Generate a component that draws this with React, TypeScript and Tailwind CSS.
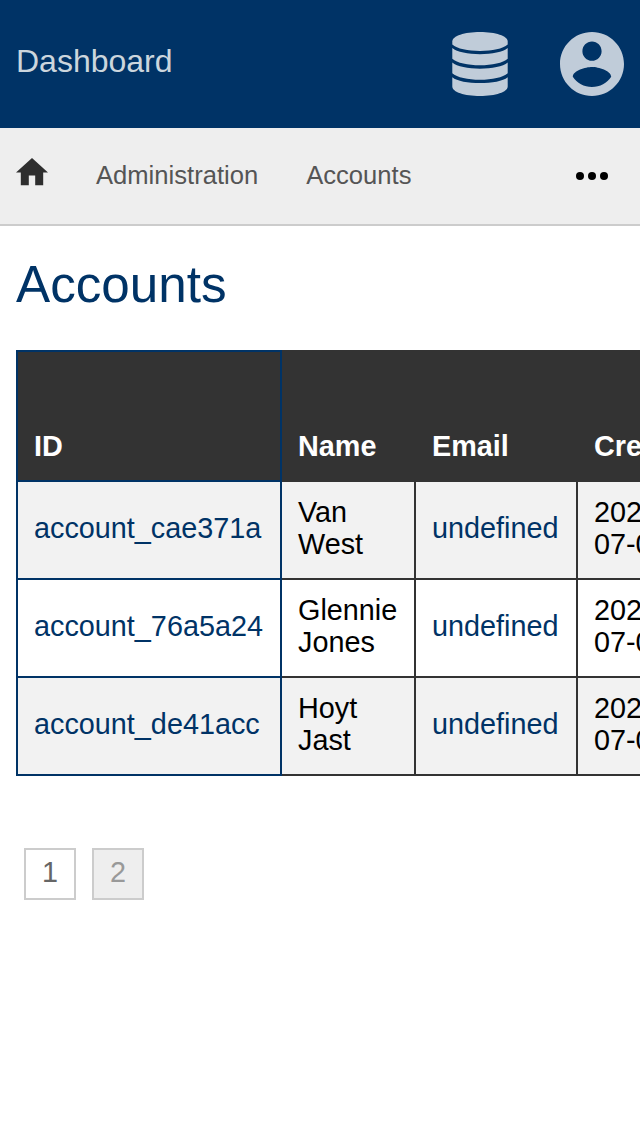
import React from "react";

const rows = [
  { id: "account_cae371a", first: "Van", last: "West", day: "07-08" },
  { id: "account_76a5a24", first: "Glennie", last: "Jones", day: "07-08" },
  { id: "account_de41acc", first: "Hoyt", last: "Jast", day: "07-08" },
];

export default function App() {
  return (
    <div className="h-[1136px] w-[640px] overflow-hidden bg-white font-['Liberation_Sans',sans-serif] text-black">
      <header className="flex h-32 items-center justify-between bg-[#003366] px-4 text-[#c0ccd9]">
        <span className="-mt-1.5 text-[32px] leading-10 text-[#ccd6dd]">Dashboard</span>
        <div className="flex items-center gap-[52px]">
          <svg className="h-16 w-14" viewBox="0 0 56 64" fill="currentColor" aria-label="Database">
            <path d="M.3 9.500C.3 4 12.500 0 28 0S55.700 4 55.700 9.500V12.600C51 17 40 19 28 19S5 17 .3 12.600Z" />
            <path d="M.3 16C5 20 16 22.200 28 22.200S51 20 55.700 16V26.700C51 31 40 33.200 28 33.200S5 31 .3 26.700Z" />
            <path d="M.3 30.600C5 34.600 16 36.800 28 36.800S51 34.600 55.700 30.600V41.300C51 45.600 40 47.800 28 47.800S5 45.600 .3 41.300Z" />
            <path d="M.3 45.200C5 49.200 16 51 28 51S51 49.200 55.700 45.200V54.500C55.700 60 43.500 64 28 64S.3 60 .3 54.500Z" />
          </svg>
          <svg className="h-16 w-16" viewBox="2 2 20 20" fill="currentColor" aria-label="Profile">
            <path d="M12 2C6.48 2 2 6.48 2 12s4.48 10 10 10 10-4.48 10-10S17.52 2 12 2zm0 3c1.66 0 3 1.34 3 3s-1.34 3-3 3-3-1.34-3-3 1.34-3 3-3zm0 14.2c-2.5 0-4.71-1.28-6-3.22.03-1.99 4-3.08 6-3.08 1.99 0 5.97 1.09 6 3.08-1.29 1.94-3.5 3.22-6 3.22z" />
          </svg>
        </div>
      </header>
      <nav className="flex h-[98px] items-center border-b-2 border-[#cccccc] bg-[#eeeeee] px-4 text-[25.6px] text-[#555555]">
        <svg className="-mt-2 h-[27.2px] w-8 text-[#2e2e2e]" viewBox="2 3 20 17" fill="currentColor" aria-label="Home">
          <path d="M10 20v-6h4v6h5v-8h3L12 3 2 12h3v8z" />
        </svg>
        <span className="-mt-0.5 ml-12">Administration</span>
        <span className="-mt-0.5 ml-12">Accounts</span>
        <svg className="mr-4 ml-auto h-2 w-8" viewBox="0 0 32 8" fill="black" aria-label="More">
          <circle cx="4" cy="4" r="4" />
          <circle cx="16" cy="4" r="4" />
          <circle cx="28" cy="4" r="4" />
        </svg>
      </nav>
      <main className="px-4 pt-[29px]">
        <h1 className="text-[51.2px] leading-[60px] text-[#003366]">Accounts</h1>
        <table className="mt-[35px] w-[800px] table-fixed border-collapse text-[28.8px] leading-8">
          <colgroup>
            <col className="w-[264px]" />
            <col className="w-[134px]" />
            <col className="w-[162px]" />
            <col className="w-[240px]" />
          </colgroup>
          <thead>
            <tr className="h-[130px] bg-[#333333] text-left align-bottom text-white">
              <th className="border-2 border-[#003366] px-4 pb-[18px]">ID</th>
              <th className="border-2 border-[#333333] px-4 pb-[18px]">Name</th>
              <th className="border-2 border-[#333333] px-4 pb-[18px]">Email</th>
              <th className="border-2 border-[#333333] px-4 pb-[18px]">Created</th>
            </tr>
          </thead>
          <tbody>
            {rows.map((row) => (
              <tr key={row.id} className="h-[98px] odd:bg-[#f2f2f2]">
                <td className="border-2 border-[#003366] px-4 pb-1 text-[#003366]">{row.id}</td>
                <td className="border-2 border-[#333333] px-4 pb-1">{row.first}<br />{row.last}</td>
                <td className="border-2 border-[#333333] px-4 pb-1 text-[#003366]">undefined</td>
                <td className="border-2 border-[#333333] px-4 pb-1">2020-<br />{row.day}</td>
              </tr>
            ))}
          </tbody>
        </table>
        <div className="mt-[72px] ml-2 flex gap-4 text-[28.8px] leading-8">
          <span className="flex h-[52px] w-[52px] items-center justify-center border-2 border-[#cccccc] pb-1 text-[#666666]">1</span>
          <span className="flex h-[52px] w-[52px] items-center justify-center border-2 border-[#cccccc] bg-[#eeeeee] pb-1 text-[#999999]">2</span>
        </div>
      </main>
    </div>
  );
}
